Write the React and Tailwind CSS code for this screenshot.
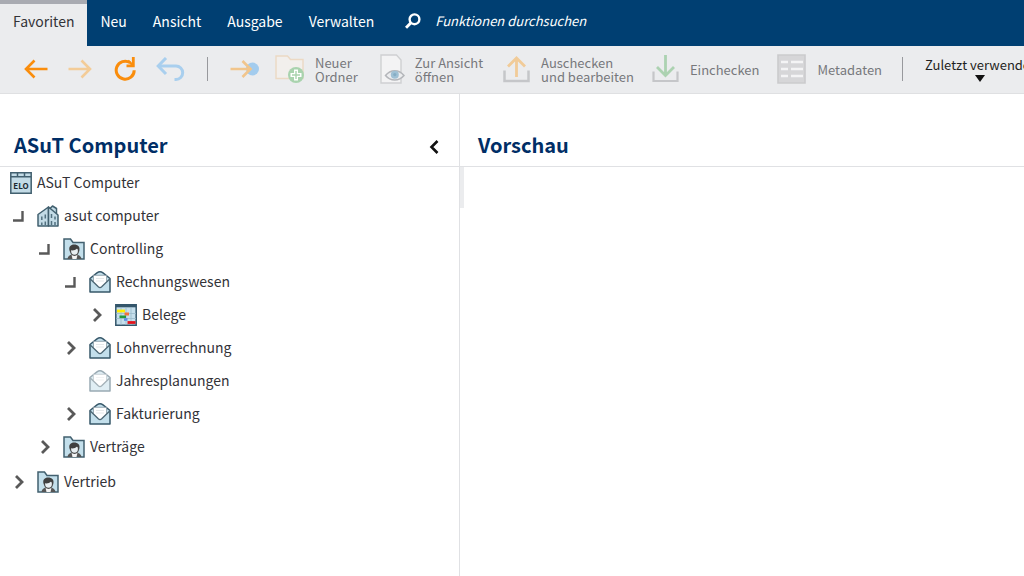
import React from "react";

const tabs = ["Favoriten", "Neu", "Ansicht", "Ausgabe", "Verwalten"];

function ArrowLeft() {
  return (
    <svg width="24" height="20" viewBox="0 0 24 20" fill="none" stroke="#fa8d0c" strokeWidth="2.6">
      <path d="M23.500 10H2M10.500 1.500L2 10l8.500 8.500" />
    </svg>
  );
}

function ArrowRight() {
  return (
    <svg width="24" height="20" viewBox="0 0 24 20" fill="none" stroke="#f3cc98" strokeWidth="2.600">
      <path d="M.5 10H22M13.500 1.500L22 10l-8.500 8.500" />
    </svg>
  );
}

function Refresh() {
  return (
    <svg width="22" height="24" viewBox="0 0 22 24" fill="none" stroke="#fa8d0c" strokeWidth="3">
      <path d="M20.200 13.200A9 9 0 1 1 16 5.600" />
      <path d="M12.500 8.800h6.800V0" strokeWidth="2.800" />
      <path d="M14 3.600l5.600 5.200" strokeWidth="2.400" />
    </svg>
  );
}

function Undo() {
  return (
    <svg width="29" height="24" viewBox="0 0 29 24" fill="none" stroke="#a9cfee" strokeWidth="3">
      <path d="M10 1L2.200 9l7.800 8" />
      <path d="M2.500 9H20a6.500 6.500 0 0 1 0 13.400h-1.500" />
    </svg>
  );
}

function GoTo() {
  return (
    <svg width="29" height="20" viewBox="0 0 29 20" fill="none">
      <circle cx="22.500" cy="10" r="6.500" fill="#a3ccee" />
      <path d="M.5 10H20M12.500 2L20.500 10l-8 8" stroke="#f1c58c" strokeWidth="2.600" />
    </svg>
  );
}

function NewFolder() {
  return (
    <svg width="30" height="30" viewBox="0 0 30 30" fill="none">
      <path d="M1 24.500V2h11.500l3 3.500H28v19z" fill="#f2efec" stroke="#ecd9c4" strokeWidth="1.400" />
      <circle cx="21" cy="21" r="8" fill="#a9d3ae" />
      <path d="M21 15.500v11M15.500 21h11" stroke="#fff" strokeWidth="4" />
      <path d="M21 17v8M17 21h8" stroke="#a9d3ae" strokeWidth="1.400" />
    </svg>
  );
}

function ViewDoc() {
  return (
    <svg width="25" height="30" viewBox="0 0 25 30" fill="none">
      <path d="M1 29V1h15.500l4.500 5v23z" fill="#f3f3f4" stroke="#cfd0d2" strokeWidth="1.400" />
      <path d="M5.500 21.500c5-6.500 13.500-6.500 18.500 0-5 6-13.500 6-18.500 0z" fill="#ecedef" stroke="#b4b6ba" strokeWidth="1.500" />
      <circle cx="14.800" cy="20.800" r="4" fill="#9fc0d4" />
      <circle cx="14.800" cy="20.600" r="1.600" fill="#86adc5" />
    </svg>
  );
}

function Upload() {
  return (
    <svg width="28" height="28" viewBox="0 0 28 28" fill="none">
      <path d="M1.500 15.500v10.500h24v-10.500" stroke="#c5c6c9" strokeWidth="2.500" />
      <path d="M13.500 22V3M5 11.500l8.500-8.500 8.500 8.500" stroke="#f1cb98" strokeWidth="2.800" />
    </svg>
  );
}

function Download() {
  return (
    <svg width="28" height="28" viewBox="0 0 28 28" fill="none">
      <path d="M1.500 16.500v9.500h24v-9.500" stroke="#c5c6c9" strokeWidth="2.200" />
      <path d="M13.500 0v19M5 12l8.500 8.500L22 12" stroke="#acd2b1" strokeWidth="2.800" />
    </svg>
  );
}

function Metadata() {
  return (
    <svg width="30" height="30" viewBox="0 0 30 30" fill="none">
      <path d="M1 1h27v28H1z" fill="#d6d6d8" stroke="#cbcbcd" strokeWidth="1.600" />
      <path d="M4 8h7M14 8H26M4 15h7M14 15H26M4 22h7M14 22H26" stroke="#f4f4f5" strokeWidth="2.600" />
    </svg>
  );
}

function Archive() {
  return (
    <svg width="22" height="22" viewBox="0 0 22 22" fill="none" stroke="#42606f" strokeWidth="1.500">
      <path d="M.8.800h20.400v20.400H.8z" fill="#c3dbe6" />
      <path d="M.8 4.800h20.400M7.500 1v3.800M14.500 1v3.800" />
      <text x="11" y="16.500" textAnchor="middle" fill="#1d2930" stroke="none" fontSize="8" fontWeight="700" fontFamily="'Noto Sans CJK SC', sans-serif">ELO</text>
    </svg>
  );
}

function Building() {
  return (
    <svg width="22" height="22" viewBox="0 0 22 22" fill="#c3dbe6" stroke="#42606f" strokeWidth="1.500" strokeLinejoin="round">
      <path d="M12.500 4l3-3 4 2.500v5h-7z" />
      <path d="M1 9.500L11.500 2V21H1z" />
      <path d="M11.500 2L21 10v11h-9.500z" />
      <path d="M4.800 11.500V15M8.300 9.500v4M4.800 17.500V20M8.300 16.500V20M14.500 9v4M18 11.500v3M14.500 16v4M18 17v3" stroke="#52707f" strokeWidth="1.500" />
    </svg>
  );
}

function PersonFolder() {
  return (
    <svg width="22" height="22" viewBox="0 0 22 22" fill="none">
      <path d="M1 21V1h6.500l2.500 3.500h11V21z" fill="#c3dfeb" stroke="#42606f" strokeWidth="1.500" />
      <path d="M4.500 21c.3-3 2.500-4.500 5-4.500h3.500c3 0 5 1.500 5.500 4.500z" fill="#555" />
      <path d="M8.500 16.500h6l-1 4.500h-4z" fill="#f4f4f4" />
      <ellipse cx="11.500" cy="13" rx="4" ry="4.300" fill="#e9eff2" stroke="#4a4a4a" strokeWidth="1.200" />
      <path d="M6.800 13.500C5 8.500 8 6.500 11 6.500c4 0 6.500 2 5.200 7-.7-1.200-1.200-2.200-2-3-1.800 1.500-3.700 2.200-6.200 1.800z" fill="#404040" />
    </svg>
  );
}

function Envelope({ faded }) {
  return (
    <svg className={faded ? "opacity-50" : ""} width="22" height="22" viewBox="0 0 22 22" fill="none" strokeLinejoin="round">
      <path d="M1 7.500l7-5.700c2-1.300 4-1.300 6 0l7 5.700V21H1z" fill="#c3dfeb" stroke="#37586a" strokeWidth="1.500" />
      <path d="M4.500 4.500h13v7L11 17l-6.500-5.500z" fill="#fff" />
      <path d="M4.500 10.500V4.300h13v6.200" stroke="#8a9aa3" strokeWidth=".8" />
      <path d="M7 7.500h8M7 10h8" stroke="#dfe3e5" strokeWidth=".8" />
      <path d="M1 7.800l8.300 8c1.100 1 2.300 1 3.400 0L21 7.800" stroke="#4c6673" strokeWidth="1.300" />
    </svg>
  );
}

function Planner() {
  return (
    <svg width="22" height="22" viewBox="0 0 22 22" fill="none">
      <path d="M.8.800h20.400v20.400H.8z" fill="#c6dfec" stroke="#34566b" strokeWidth="1.500" />
      <path d="M1 2h20" stroke="#34566b" strokeWidth="2.600" />
      <path d="M6 4v17M11 4v17M16 4v17M1 9.500h20M1 14.500h20" stroke="#9bbacb" strokeWidth=".8" />
      <path d="M2 7h8" stroke="#ffed00" strokeWidth="2.800" />
      <path d="M9.500 10H14" stroke="#f1743b" strokeWidth="3" />
      <path d="M4.500 12.800H11" stroke="#239a3b" strokeWidth="2.600" />
      <path d="M9 15.500h3.500" stroke="#5c8fe2" strokeWidth="2.600" />
      <path d="M12.500 18.500h8" stroke="#e3131b" strokeWidth="2.800" />
    </svg>
  );
}

function Toggle({ open, label }) {
  return (
    <button type="button" aria-expanded={open} aria-label={label} className="flex h-6 w-6 items-center justify-center">
      <svg width="14" height="16" viewBox="0 0 14 16" fill="none" stroke="#595959" strokeWidth="2.800">
        {open ? <path d="M2 12.500h9.500V3" strokeWidth="2.400" /> : <path d="M5 2l6 6-6 6" />}
      </svg>
    </button>
  );
}

const tree = [
  {
    name: "asut computer", Icon: Building, open: true, children: [
      {
        name: "Controlling", Icon: PersonFolder, open: true, children: [
          {
            name: "Rechnungswesen", Icon: Envelope, open: true, children: [
              { name: "Belege", Icon: Planner, open: false },
            ],
          },
          { name: "Lohnverrechnung", Icon: Envelope, open: false },
          { name: "Jahresplanungen", Icon: Envelope, leaf: true },
          { name: "Fakturierung", Icon: Envelope, open: false },
        ],
      },
      { name: "Verträge", Icon: PersonFolder, open: false },
    ],
  },
  { name: "Vertrieb", Icon: PersonFolder, open: false },
];

function Node({ node, top }) {
  const { name, Icon, open, leaf, children } = node;
  return (
    <li className={top ? "mb-0.5" : ""}>
      <div className="flex h-[33px] items-center">
        {leaf ? <span className="w-6" /> : <Toggle open={open} label={name} />}
        <a href="#" className="ml-[7px] flex items-center gap-[5px]">
          <Icon faded={leaf} />
          <span className="pb-0.5">{name}</span>
        </a>
      </div>
      {children && (
        <ul className="pl-[26px]">
          {children.map((c) => <Node key={c.name} node={c} />)}
        </ul>
      )}
    </li>
  );
}

function Tool({ icon, lines, className }) {
  return (
    <button type="button" className={"flex shrink-0 items-center gap-[10px] text-left whitespace-nowrap " + className}>
      {icon}
      <span className="flex flex-col pt-0.5">
        {lines.map((line) => <span key={line}>{line}</span>)}
      </span>
    </button>
  );
}

export default function App() {
  return (
    <div className="flex min-h-screen flex-col overflow-hidden bg-white font-['Noto_Sans_CJK_SC','Noto_Sans',sans-serif] text-sm text-[#333338]">
      <header className="flex h-[46px] bg-[#003f72] text-white">
        <nav className="flex">
          {tabs.map((t, i) => (
            <a
              key={t}
              href="#"
              className={
                i === 0
                  ? "flex items-center border-t-4 border-[#a9abb2] bg-[#ebecee] px-[13px] pb-2 text-[#333338]"
                  : "flex items-center px-[13px] pb-1"
              }
            >
              {t}
            </a>
          ))}
        </nav>
        <label className="ml-[18px] flex flex-1 items-center gap-[14px] pb-1">
          <svg width="16" height="16" viewBox="0 0 16 16" fill="none" stroke="#fff" strokeWidth="2.400">
            <circle cx="9.500" cy="6.300" r="4.900" />
            <path d="M6 9.800L1 14.800" strokeWidth="3" />
          </svg>
          <input aria-label="Funktionen durchsuchen" placeholder="Funktionen durchsuchen" className="w-full flex-1 bg-transparent text-[13px] italic outline-none placeholder:text-white" />
        </label>
      </header>

      <div className="flex h-12 items-center overflow-hidden border-b border-[#dfe0e2] bg-[#ebecee] pb-0.5 pl-6 text-[13px] leading-[14px] text-[#77787c]">
        <button type="button" aria-label="Zurück" className="shrink-0"><ArrowLeft /></button>
        <button type="button" aria-label="Vorwärts" className="ml-5 shrink-0"><ArrowRight /></button>
        <button type="button" aria-label="Aktualisieren" className="ml-[22px] shrink-0"><Refresh /></button>
        <button type="button" aria-label="Rückgängig" className="ml-5 shrink-0"><Undo /></button>
        <span className="ml-[22px] h-6 w-px shrink-0 bg-[#98999d]" />
        <button type="button" aria-label="Gehe zu" className="ml-[22px] shrink-0"><GoTo /></button>
        <Tool icon={<NewFolder />} className="ml-4" lines={["Neuer", "Ordner"]} />
        <Tool icon={<ViewDoc />} className="ml-[22px]" lines={["Zur Ansicht", "öffnen"]} />
        <Tool icon={<Upload />} className="ml-5" lines={["Auschecken", "und bearbeiten"]} />
        <Tool icon={<Download />} className="ml-[18px]" lines={["Einchecken"]} />
        <Tool icon={<Metadata />} className="ml-[18px]" lines={["Metadaten"]} />
        <span className="ml-5 h-6 w-px shrink-0 bg-[#98999d]" />
        <button type="button" className="ml-[22px] flex shrink-0 flex-col items-center gap-[3px] pt-0.5 whitespace-nowrap text-[#1f1f22]">
          Zuletzt verwendet
          <svg width="10" height="7" viewBox="0 0 10 7"><path d="M0 0h10L5 7z" fill="#111" /></svg>
        </button>
      </div>

      <main className="flex flex-1">
        <section className="flex w-[460px] shrink-0 flex-col border-r border-[#e0e1e4]">
          <div className="flex h-[73px] items-end justify-between border-b border-[#e0e1e4] pr-5 pb-[7px] pl-[14px]">
            <h1 className="text-xl font-bold text-[#002e66]">ASuT Computer</h1>
            <button type="button" aria-label="Einklappen" className="mb-[5px]">
              <svg width="10" height="14" viewBox="0 0 10 14" fill="none" stroke="#111" strokeWidth="2.600"><path d="M8.500 1l-6 6 6 6" /></svg>
            </button>
          </div>
          <a href="#" className="flex h-8 items-center gap-[5px] pl-[10px]">
            <Archive />
            <span className="pb-0.5">ASuT Computer</span>
          </a>
          <ul className="pl-1.5">
            {tree.map((n) => <Node key={n.name} node={n} top />)}
          </ul>
        </section>
        <section className="flex-1">
          <div className="flex h-[73px] items-end border-b border-[#e0e1e4] pb-[7px] pl-[18px]">
            <h2 className="text-xl font-bold text-[#002e66]">Vorschau</h2>
          </div>
          <div className="h-[41px] w-1 bg-[#ebecee]" />
        </section>
      </main>
    </div>
  );
}
